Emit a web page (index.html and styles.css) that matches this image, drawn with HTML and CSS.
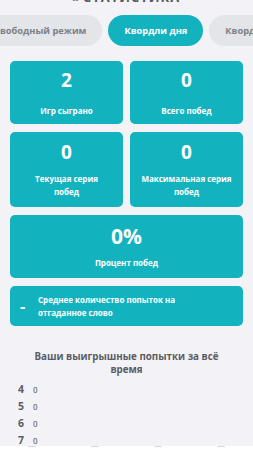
FILE: index.html
```html
<!DOCTYPE html>
<html lang="ru">
<head>
    <meta charset="UTF-8">
    <meta name="viewport" content="width=device-width, initial-scale=1.0">
    <title>Статистика</title>
    <link rel="stylesheet" href="styles.css">
</head>
<body>
    <div class="page">
        <h1 class="title"><span class="title-icon">&#9642;&#9642;</span> СТАТИСТИКА</h1>

        <div class="tabs">
            <div class="tab">Свободный режим</div>
            <div class="tab active">Квордли дня</div>
            <div class="tab">Квордли недели</div>
        </div>

        <div class="stats">
            <div class="card">
                <div class="num">2</div>
                <div class="label">Игр сыграно</div>
            </div>
            <div class="card">
                <div class="num">0</div>
                <div class="label">Всего побед</div>
            </div>
            <div class="card">
                <div class="num">0</div>
                <div class="label">Текущая серия<br>побед</div>
            </div>
            <div class="card">
                <div class="num">0</div>
                <div class="label">Максимальная серия<br>побед</div>
            </div>
            <div class="card wide">
                <div class="num big">0%</div>
                <div class="label">Процент побед</div>
            </div>
            <div class="card row">
                <div class="dash">-</div>
                <div class="label left">Среднее количество попыток на<br>отгаданное слово</div>
            </div>
        </div>

        <h2 class="subtitle">Ваши выигрышные попытки за всё<br>время</h2>

        <ul class="tries">
            <li><b>4</b><span>0</span></li>
            <li><b>5</b><span>0</span></li>
            <li><b>6</b><span>0</span></li>
            <li><b>7</b><span>0</span></li>
        </ul>
    </div>

    <div class="navbar">
        <span></span><span></span><span></span><span></span>
    </div>
</body>
</html>
```

FILE: styles.css
```css
* {
    margin: 0;
    padding: 0;
    box-sizing: border-box;
}
ul {
    list-style: none;
}
html, body {
    height: 100%;
}
body {
    background: #f3f3f7;
    font-family: "Open Sans", "Noto Sans", sans-serif;
    color: #555a60;
    overflow: hidden;
    display: flex;
    flex-direction: column;
}
.page {
    flex: 1;
    overflow: hidden;
}
.title {
    margin-top: -10px;
    height: 15px;
    text-align: center;
    font-size: 13px;
    font-weight: 700;
    letter-spacing: 1px;
    color: #55575c;
    line-height: 15px;
    white-space: nowrap;
}
.title-icon {
    font-size: 8px;
    letter-spacing: 0;
}
.tabs {
    display: flex;
    gap: 6px;
    margin: 10px 0 0 -22px;
    white-space: nowrap;
}
.tab {
    flex: none;
    height: 31px;
    line-height: 31px;
    padding: 0 16px;
    border-radius: 16px;
    background: #e3e5e9;
    color: #7c8087;
    font-size: 9.3px;
    font-weight: 700;
}
.tab.active {
    background: #12b3bf;
    color: #fff;
}
.stats {
    display: grid;
    grid-template-columns: 1fr 1fr;
    gap: 8px 7px;
    padding: 15px 10px 0;
}
.card {
    background: #12b3bf;
    border-radius: 5px;
    color: #fff;
    text-align: center;
    display: flex;
    flex-direction: column;
    align-items: center;
    justify-content: center;
    gap: 13px;
    height: 63px;
}
.stats .card:nth-child(3),
.stats .card:nth-child(4) {
    height: 75px;
    gap: 9px;
}
.card.wide {
    grid-column: span 2;
    height: 63px;
    gap: 9px;
}
.card.row {
    grid-column: span 2;
    height: 40px;
    flex-direction: row;
    justify-content: flex-start;
    gap: 0;
    padding-left: 10px;
}
.num {
    font-size: 19px;
    font-weight: 700;
    line-height: 22px;
}
.num.big {
    font-size: 21px;
}
.label {
    font-size: 8px;
    font-weight: 700;
    line-height: 13px;
}
.label.left {
    text-align: left;
}
.dash {
    width: 18px;
    text-align: left;
    font-size: 16px;
    font-weight: 700;
}
.subtitle {
    margin-top: 24px;
    text-align: center;
    font-size: 9.8px;
    font-weight: 700;
    line-height: 13px;
    color: #5a5d63;
}
.tries {
    padding: 5px 0 0 18px;
}
.tries li {
    display: flex;
    align-items: baseline;
    gap: 9px;
    height: 17px;
    line-height: 17px;
}
.tries b {
    font-size: 10.5px;
    font-weight: 700;
    color: #5a5d63;
}
.tries span {
    font-size: 8px;
    font-weight: 600;
    color: #707378;
}
.navbar {
    height: 4px;
    background: #fff;
    display: flex;
    justify-content: space-around;
}
.navbar span {
    width: 8px;
    height: 2px;
    border-top: 1px solid #d4d5d8;
    border-radius: 4px 4px 0 0;
}
```
